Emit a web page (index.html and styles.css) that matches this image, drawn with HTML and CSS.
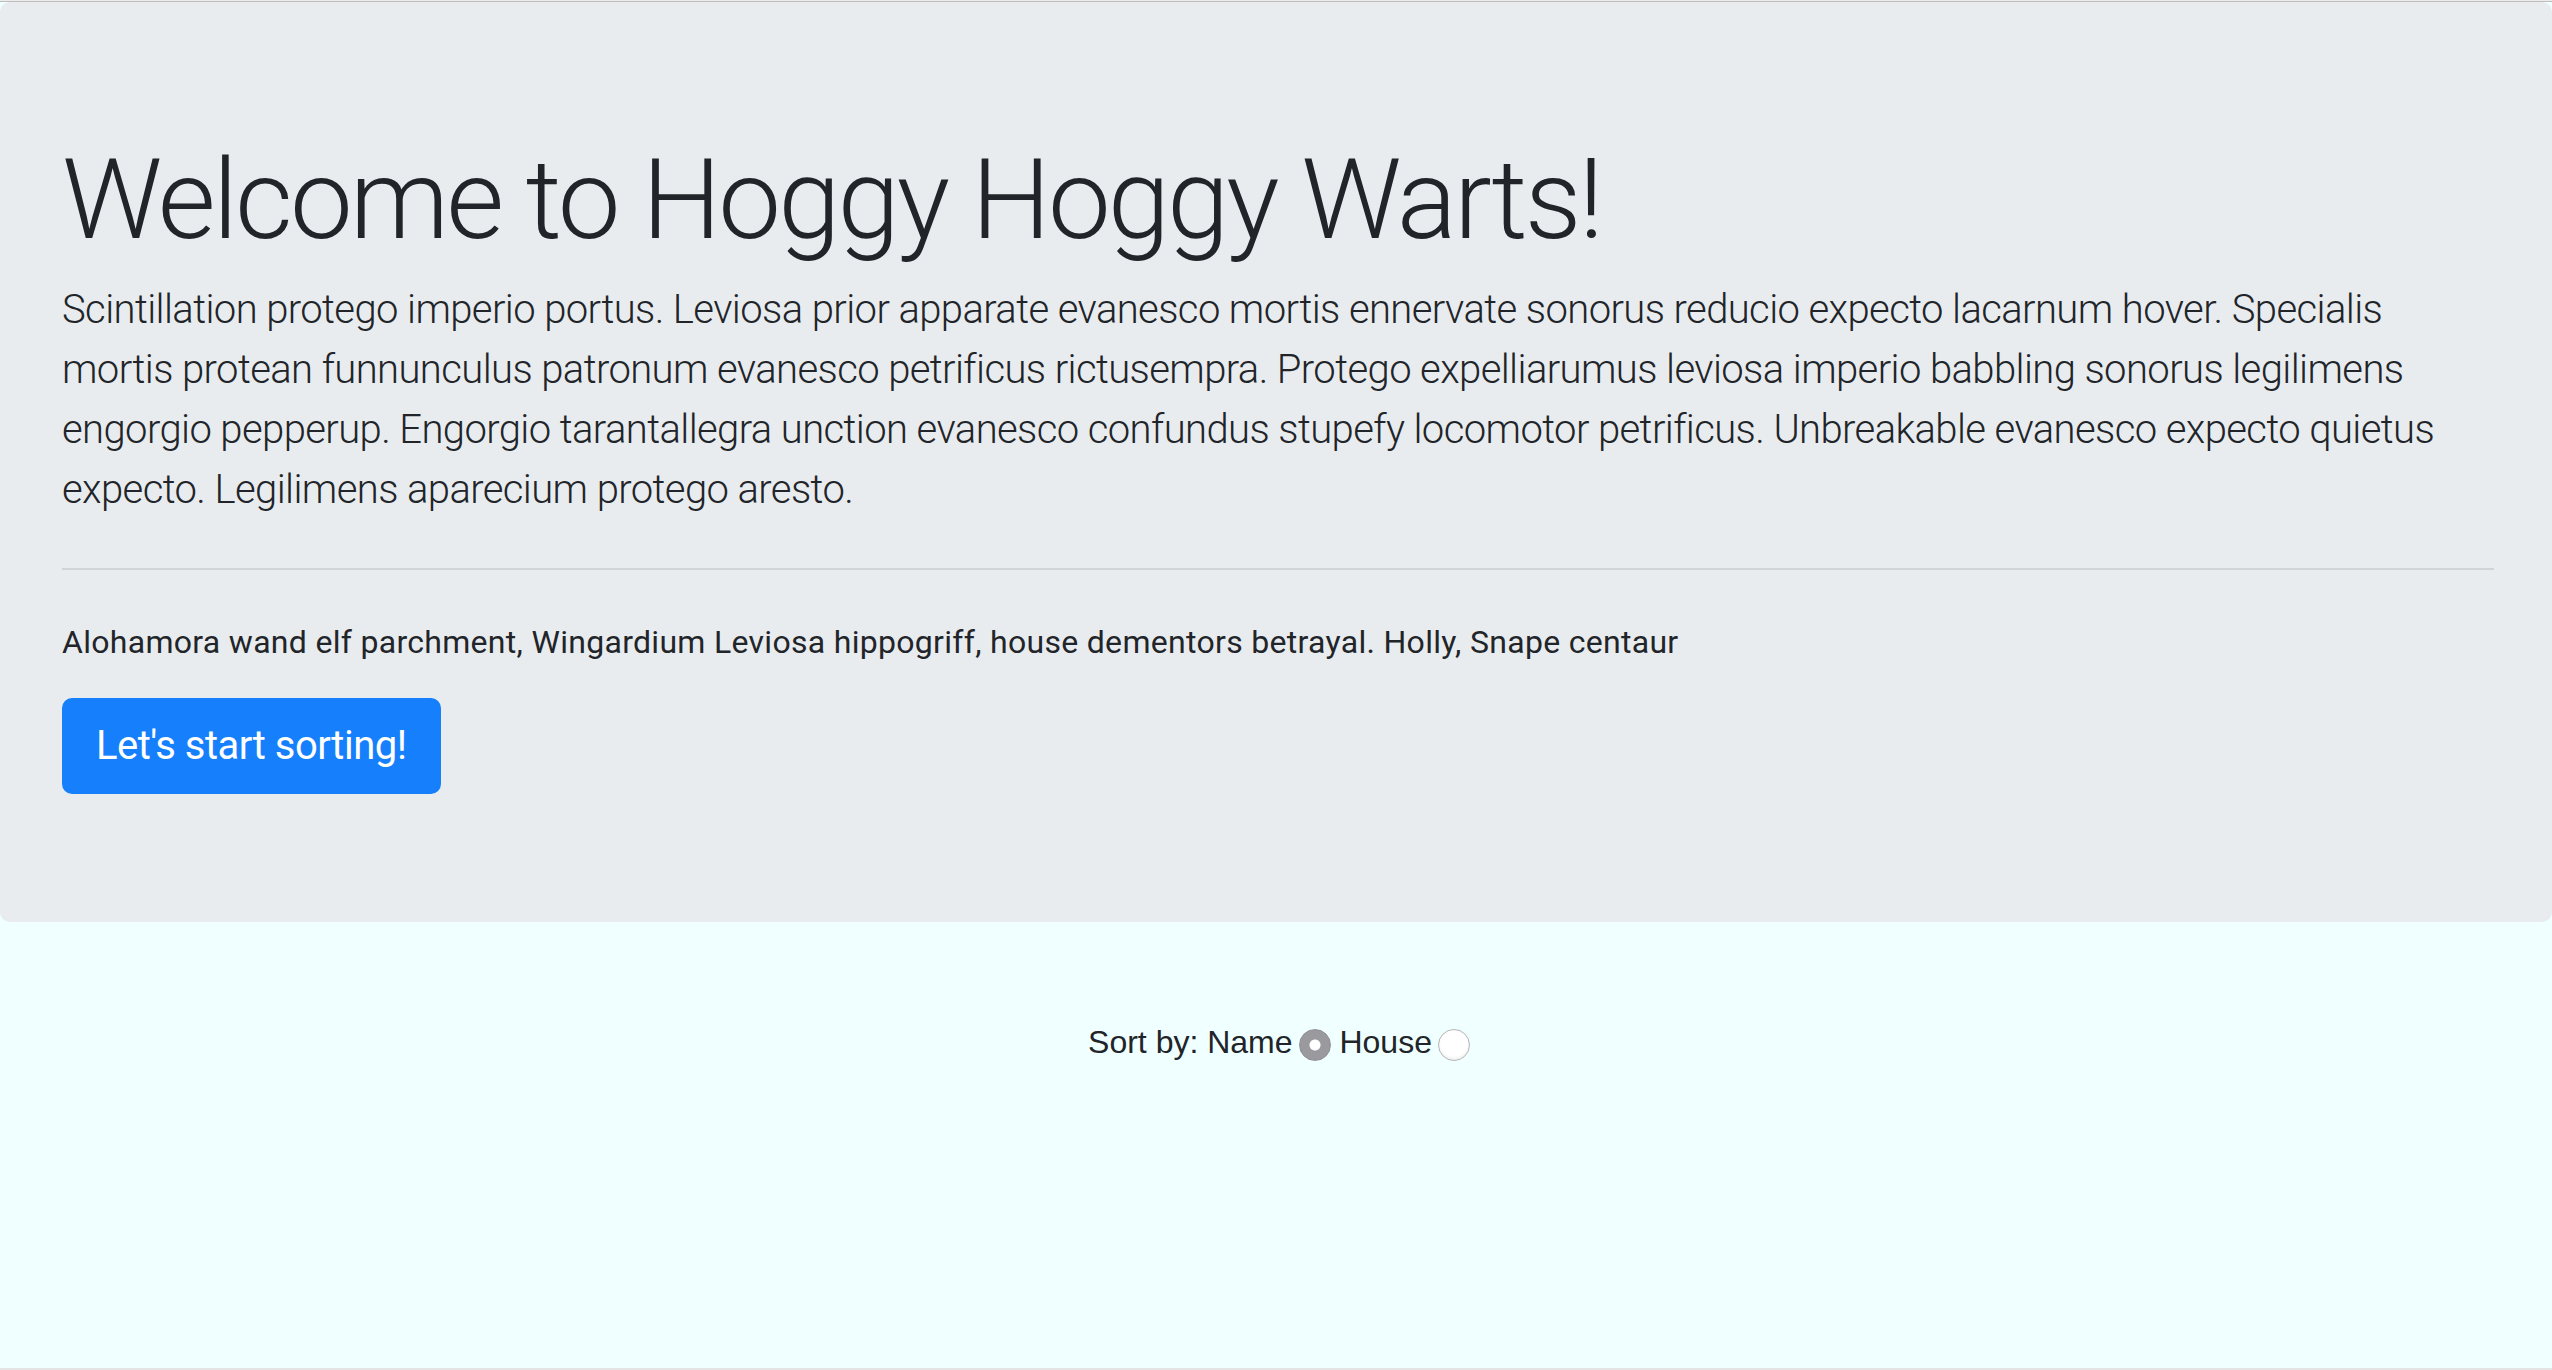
FILE: index.html
```html
<!DOCTYPE html>
<html lang="en">
<head>
<meta charset="utf-8">
<title>Hoggy Hoggy Warts</title>
<link rel="stylesheet" href="styles.css">
</head>
<body>
<div class="topline"></div>
<main class="app">
  <section class="jumbotron">
    <h1 class="display">Welcome to Hoggy Hoggy Warts!</h1>
    <p class="lead">Scintillation protego imperio portus. Leviosa prior apparate evanesco mortis ennervate sonorus reducio expecto lacarnum hover. Specialis mortis protean funnunculus patronum evanesco petrificus rictusempra. Protego expelliarumus leviosa imperio babbling sonorus legilimens engorgio pepperup. Engorgio tarantallegra unction evanesco confundus stupefy locomotor petrificus. Unbreakable evanesco expecto quietus expecto. Legilimens aparecium protego aresto.</p>
    <hr class="divider">
    <p class="sub">Alohamora wand elf parchment, Wingardium Leviosa hippogriff, house dementors betrayal. Holly, Snape centaur</p>
    <div class="actions"><a class="btn-primary" href="#">Let's start sorting!</a></div>
  </section>
  <div class="sort">Sort by: Name<input type="radio" name="sort" class="radio" checked> House<input type="radio" name="sort" class="radio"></div>
</main>
</body>
</html>
```
FILE: styles.css
```css
html {
  background: #f0ffff;
}
body {
  margin: 0;
  min-height: 100vh;
  box-sizing: border-box;
  display: flex;
  flex-direction: column;
  border-top: 1px solid #ececec;
  border-bottom: 2px solid #e4e4e4;
  background: #f0ffff;
  color: #212529;
  font-family: Roboto, "Noto Sans", sans-serif;
}
.topline {
  height: 1px;
  background: #bdbdbd;
  flex: none;
}
.app {
  flex: 1;
  display: flex;
  flex-direction: column;
}
.jumbotron {
  background: #e9ecef;
  border-radius: 10px;
  padding: 128px 58px 128px 62px;
  margin-bottom: 64px;
}
.display {
  font-size: 112px;
  font-weight: 300;
  line-height: 1.2;
  padding-top: 3px;
  margin: 0 0 13px;
  letter-spacing: -2.9px;
}
.lead {
  font-size: 40px;
  font-weight: 300;
  line-height: 60px;
  margin: 0 0 32px;
  letter-spacing: -0.6px;
}
.divider {
  margin: 48px 0;
  border: 0;
  border-top: 2px solid rgba(0, 0, 0, 0.1);
  height: 0;
}
.sub {
  font-size: 32px;
  line-height: 48px;
  margin: 0 0 32px;
  letter-spacing: 0.3px;
}
.actions {
  display: flex;
}
.btn-primary {
  display: inline-block;
  font-size: 40px;
  line-height: 60px;
  padding: 16px 32px;
  border: 2px solid #167ffc;
  border-radius: 10px;
  background: #167ffc;
  color: #fff;
  text-decoration: none;
  letter-spacing: -0.5px;
}
.sort {
  padding: 32px 0 0 6px;
  text-align: center;
  font-family: "Liberation Sans", Arial, sans-serif;
  font-size: 32px;
  line-height: 48px;
  color: #212529;
}
.radio {
  appearance: none;
  -webkit-appearance: none;
  box-sizing: border-box;
  width: 32px;
  height: 32px;
  margin: 0 0 0 6px;
  border-radius: 50%;
  vertical-align: -8px;
  background: #fff;
  border: 1px solid #b4b4b4;
  box-shadow: inset 0 -2px 3px rgba(0, 0, 0, 0.06);
}
.radio:checked {
  border: 1px solid #918f95;
  background: radial-gradient(circle, #fff 0, #fff 5px, #9a999e 6px);
  box-shadow: none;
}
```
